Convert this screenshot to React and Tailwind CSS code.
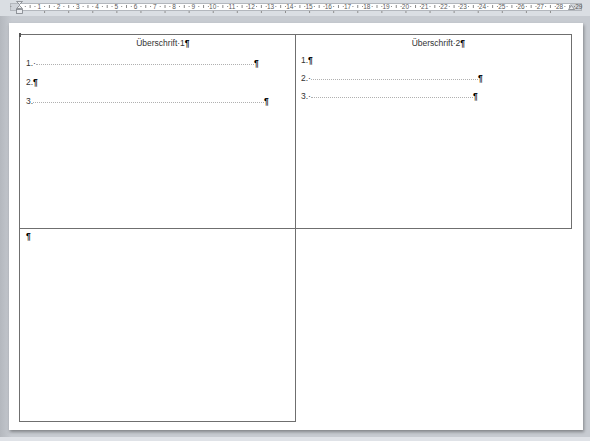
import React from "react";

const CM = 19.27;
const ORIGIN = 20;

function Ruler() {
  const nums = [];
  const ticks = [];
  for (let n = 0; n <= 29; n++) {
    const x = ORIGIN + n * CM;
    if (n >= 1 && n <= 28) {
      nums.push(
        <text key={"n" + n} x={x} y={8.9} textAnchor="middle" fontSize="6.5" fill="#5a5a5a" fontFamily="Liberation Sans, Arial, sans-serif">
          {n}
        </text>
      );
    }
    if (n < 29) {
      const q1 = x + CM * 0.25;
      const q2 = x + CM * 0.5;
      const q3 = x + CM * 0.75;
      ticks.push(<rect key={"a" + n} x={q1} y={6} width={1} height={1} fill="#8a8a8a" />);
      ticks.push(<rect key={"b" + n} x={q2} y={5} width={1} height={3} fill="#8a8a8a" />);
      ticks.push(<rect key={"c" + n} x={q3} y={6} width={1} height={1} fill="#8a8a8a" />);
    }
  }
  ticks.push(<rect key="lm" x={ORIGIN - CM * 0.5} y={6} width={1} height={1} fill="#8a8a8a" />);
  const tabs = [];
  for (let k = 1; k <= 22; k++) {
    const x = ORIGIN + k * 24.09;
    if (x < 568) tabs.push(<rect key={"t" + k} x={x} y={11} width={1} height={2} fill="#8e8e8e" />);
  }
  return (
    <svg width="590" height="16" className="block flex-none">
      <rect x="0" y="0" width="590" height="16" fill="#dadee3" />
      <rect x="10.5" y="3.5" width="571" height="7" fill="#cfd3d9" stroke="#b3b7bd" />
      <rect x="20" y="4" width="550" height="6" fill="#ffffff" />
      {ticks}
      {nums}
      <text x={ORIGIN + 29 * CM} y={8.9} textAnchor="middle" fontSize="6.5" fill="#5a5a5a" fontFamily="Liberation Sans, Arial, sans-serif">29</text>
      {tabs}
      <path d="M16.5 1.5 H22.5 L19.5 4.5 Z" fill="#e8eaee" stroke="#7d8187" strokeWidth="0.8" />
      <path d="M19.5 5.5 L22.5 8.5 H16.5 Z" fill="#e8eaee" stroke="#7d8187" strokeWidth="0.8" />
      <rect x="16.5" y="9.5" width="6" height="4" fill="#e8eaee" stroke="#7d8187" strokeWidth="0.8" />
      <path d="M571.5 5.5 L574.5 9.5 H568.5 Z" fill="#e8eaee" stroke="#7d8187" strokeWidth="0.8" />
    </svg>
  );
}

function Pilcrow() {
  return <span className="text-[#000000] font-bold">¶</span>;
}

function Leader({ w }) {
  return (
    <span
      className="inline-block flex-none border-b border-dotted border-[#b0b0b0] h-[7px] self-start"
      style={{ width: w }}
    />
  );
}

function Line({ label, leader, mt }) {
  return (
    <div className={`flex items-start h-[10px] leading-[10px] ${mt}`}>
      <span>{label}</span>
      {leader ? <Leader w={leader} /> : null}
      <Pilcrow />
    </div>
  );
}

function Heading({ children }) {
  return (
    <div className="flex justify-center h-[10px] leading-[10px]">
      <span className="relative">
        {children}
        <span className="absolute left-full top-0">
          <Pilcrow />
        </span>
      </span>
    </div>
  );
}

export default function App() {
  return (
    <div
      className="w-[590px] h-[441px] overflow-hidden flex flex-col bg-[#c7cbd1] text-[8.5px] text-[#333]"
      style={{ fontFamily: '"Liberation Sans", Arial, sans-serif' }}
    >
      <Ruler />
      <div className="flex-1 bg-gradient-to-r from-[#b4b8be] via-[#c7cbd1] via-[2%] to-[#c7cbd1]">
        <div className="ml-[9px] mt-[7px] w-[574px] h-[407px] bg-white shadow-[1px_2px_3px_rgba(0,0,0,0.35)] pt-[11px] pl-[10px]">
          <div className="grid grid-cols-[277px_276px] grid-rows-[195px_193px]">
            <div className="border border-[#6f6f6f] pt-[3px] pl-[6px] relative">
              <span className="absolute left-[-1px] top-[-2px] w-[2px] h-[4px] bg-[#555]" />
              <Heading>Überschrift·1</Heading>
              <Line label="1.·" leader={218} mt="mt-[10px]" />
              <Line label="2." mt="mt-[9px]" />
              <Line label="3." leader={231} mt="mt-[9px]" />
            </div>
            <div className="border-t border-r border-b border-[#6f6f6f] pt-[3px] pl-[5px]">
              <Heading>Überschrift·2</Heading>
              <Line label="1." mt="mt-[7px]" />
              <Line label="2.·" leader={167} mt="mt-[8px]" />
              <Line label="3.·" leader={162} mt="mt-[8px]" />
            </div>
            <div className="border-l border-r border-b border-[#6f6f6f] pt-[2px] pl-[6px]">
              <div className="h-[10px] leading-[10px]">
                <Pilcrow />
              </div>
            </div>
            <div />
          </div>
        </div>
      </div>
      <div className="h-[4px] flex-none bg-[#dfe2e7]" />
    </div>
  );
}
